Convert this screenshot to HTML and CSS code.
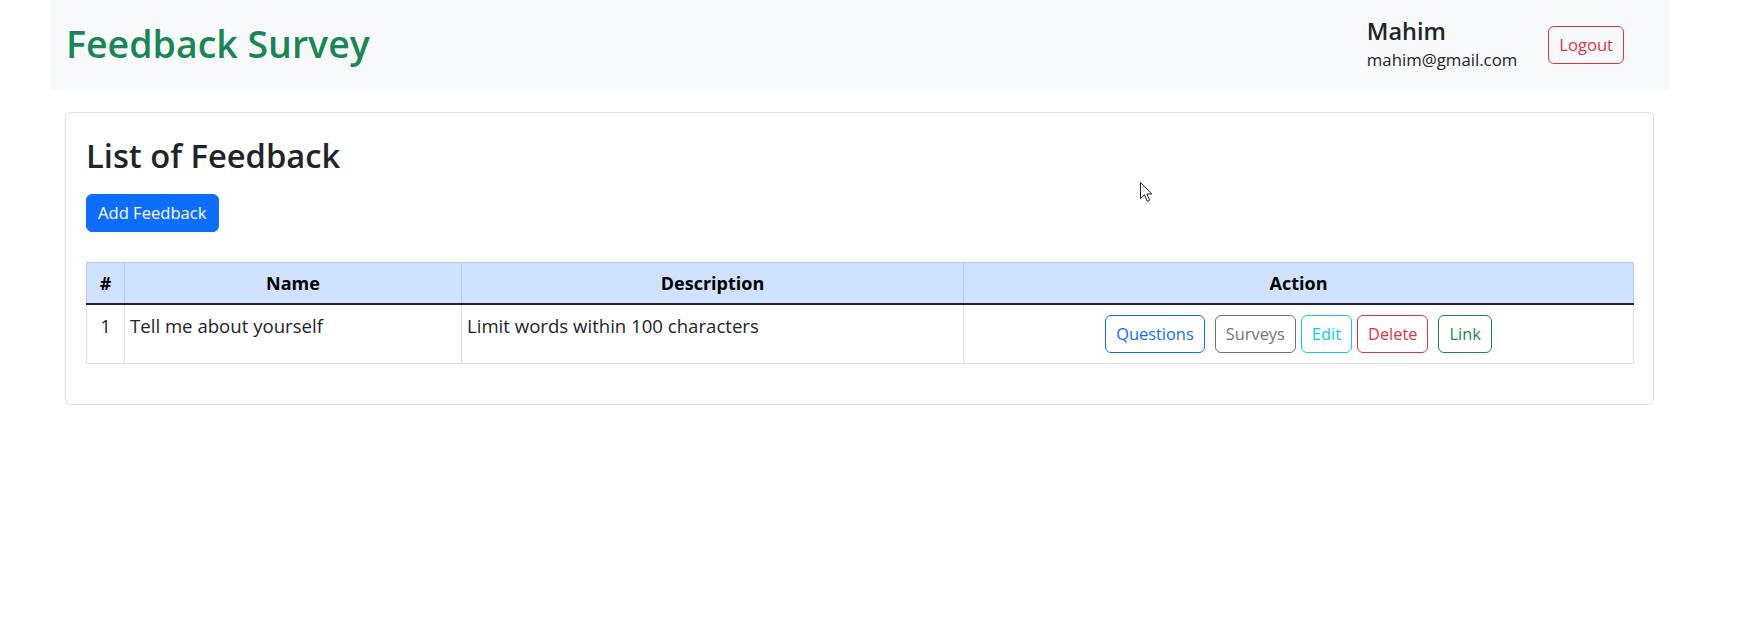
FILE: index.html
```html
<!DOCTYPE html>
<html lang="en">
<head>
<meta charset="utf-8">
<title>Feedback Survey</title>
<link rel="stylesheet" href="styles.css">
</head>
<body>
<nav class="navbar">
  <div class="brand">Feedback Survey</div>
  <div class="user">
    <div class="user-info">
      <div class="user-name">Mahim</div>
      <div class="user-email">mahim@gmail.com</div>
    </div>
    <button class="btn btn-logout btn-outline-danger">Logout</button>
  </div>
</nav>
<main class="card">
  <h2 class="card-title">List of Feedback</h2>
  <div class="toolbar"><button class="btn btn-primary">Add Feedback</button></div>
  <table class="table">
    <colgroup>
      <col class="col-num">
      <col class="col-name">
      <col class="col-desc">
      <col class="col-action">
    </colgroup>
    <thead>
      <tr>
        <th>#</th>
        <th>Name</th>
        <th>Description</th>
        <th>Action</th>
      </tr>
    </thead>
    <tbody>
      <tr>
        <td class="num">1</td>
        <td>Tell me about yourself</td>
        <td>Limit words within 100 characters</td>
        <td class="actions">
          <div class="action-group">
            <button class="btn btn-sm-pad btn-outline-primary gap-lg">Questions</button>
            <button class="btn btn-sm-pad btn-outline-secondary gap-sm">Surveys</button>
            <button class="btn btn-sm-pad btn-outline-info gap-sm">Edit</button>
            <button class="btn btn-sm-pad btn-outline-danger gap-lg">Delete</button>
            <button class="btn btn-sm-pad btn-outline-success">Link</button>
          </div>
        </td>
      </tr>
    </tbody>
  </table>
</main>
<svg class="cursor" width="13" height="21" viewBox="0 0 13 21" aria-hidden="true">
  <path d="M0.5 0.5 L0.5 16.5 L4.5 12.8 L7.2 19.3 L9.6 18.3 L6.9 12 L11.8 12 Z" fill="#fff" stroke="#222" stroke-width="1" stroke-linejoin="miter"/>
</svg>
</body>
</html>
```

FILE: styles.css
```css
* { box-sizing: border-box; }

body {
  margin: 0;
  font-family: "Open Sans", "Noto Sans", "Liberation Sans", sans-serif;
  font-size: 18px;
  line-height: 1.5;
  color: #212529;
  background: #fff;
  position: relative;
}

.navbar {
  margin: 0 69px 0 50px;
  height: 90px;
  background: #f8f9fa;
  display: flex;
  align-items: center;
  justify-content: space-between;
  padding: 0 46px 0 16px;
}

.brand {
  font-size: 37.5px;
  font-weight: 600;
  color: #198754;
  line-height: 1.2;
  margin-top: -4px;
}

.user {
  display: flex;
  align-items: center;
  gap: 31px;
}

.user-info {
  display: flex;
  flex-direction: column;
  margin-top: -1px;
}

.user-name {
  font-size: 23.5px;
  font-weight: 600;
  line-height: 1.2;
}

.user-email {
  font-size: 16.8px;
  line-height: 1.5;
  margin-top: 2px;
}

.btn {
  display: inline-block;
  font-family: inherit;
  font-size: 16.6px;
  line-height: 24px;
  padding: 6px 11px;
  border: 1px solid transparent;
  border-radius: 6px;
  background: transparent;
  cursor: pointer;
}

.btn-logout {
  padding: 6px 10px;
}

.btn-sm-pad {
  font-size: 16.4px;
  padding: 6px 10px;
}

.btn-primary { background: #0d6efd; border-color: #0d6efd; color: #fff; }
.btn-outline-primary { border-color: #0d6efd; color: #0d6efd; }
.btn-outline-secondary { border-color: #6c757d; color: #6c757d; }
.btn-outline-info { border-color: #0dcaf0; color: #0dcaf0; }
.btn-outline-danger { border-color: #dc3545; color: #dc3545; }
.btn-outline-success { border-color: #198754; color: #198754; }

.card {
  display: block;
  margin: 22px 85px 0 65px;
  border: 1px solid #dfdfdf;
  border-radius: 6px;
  padding: 20px 19px 40px 20px;
}

.card-title {
  margin: 0;
  font-size: 32.7px;
  font-weight: 600;
  line-height: 1.2;
  padding-top: 3px;
  color: #212529;
}

.toolbar {
  margin-top: 19px;
  margin-bottom: 30px;
}

.table {
  width: 100%;
  border-collapse: collapse;
  table-layout: fixed;
  vertical-align: top;
}

.col-num { width: 38px; }
.col-name { width: 337px; }
.col-desc { width: 502px; }

.table th {
  background: #cfe2ff;
  color: #000;
  font-weight: 700;
  font-size: 18px;
  text-align: center;
  padding: 8px 5px;
  border: 1px solid #bacbe6;
  border-bottom: 2px solid #212529;
  line-height: 24px;
}

.table td {
  padding: 9px 5px 8px;
  border: 1px solid #dee2e6;
  border-top: 0;
  line-height: 24px;
  font-size: 18.6px;
  vertical-align: top;
}

.table td.num { text-align: center; }

.table td.actions {
  padding: 10px 5px;
}

.action-group {
  display: flex;
  justify-content: center;
  align-items: center;
}

.gap-lg { margin-right: 10px; }
.gap-sm { margin-right: 5px; }

.cursor {
  position: absolute;
  left: 1140px;
  top: 182px;
}
```
